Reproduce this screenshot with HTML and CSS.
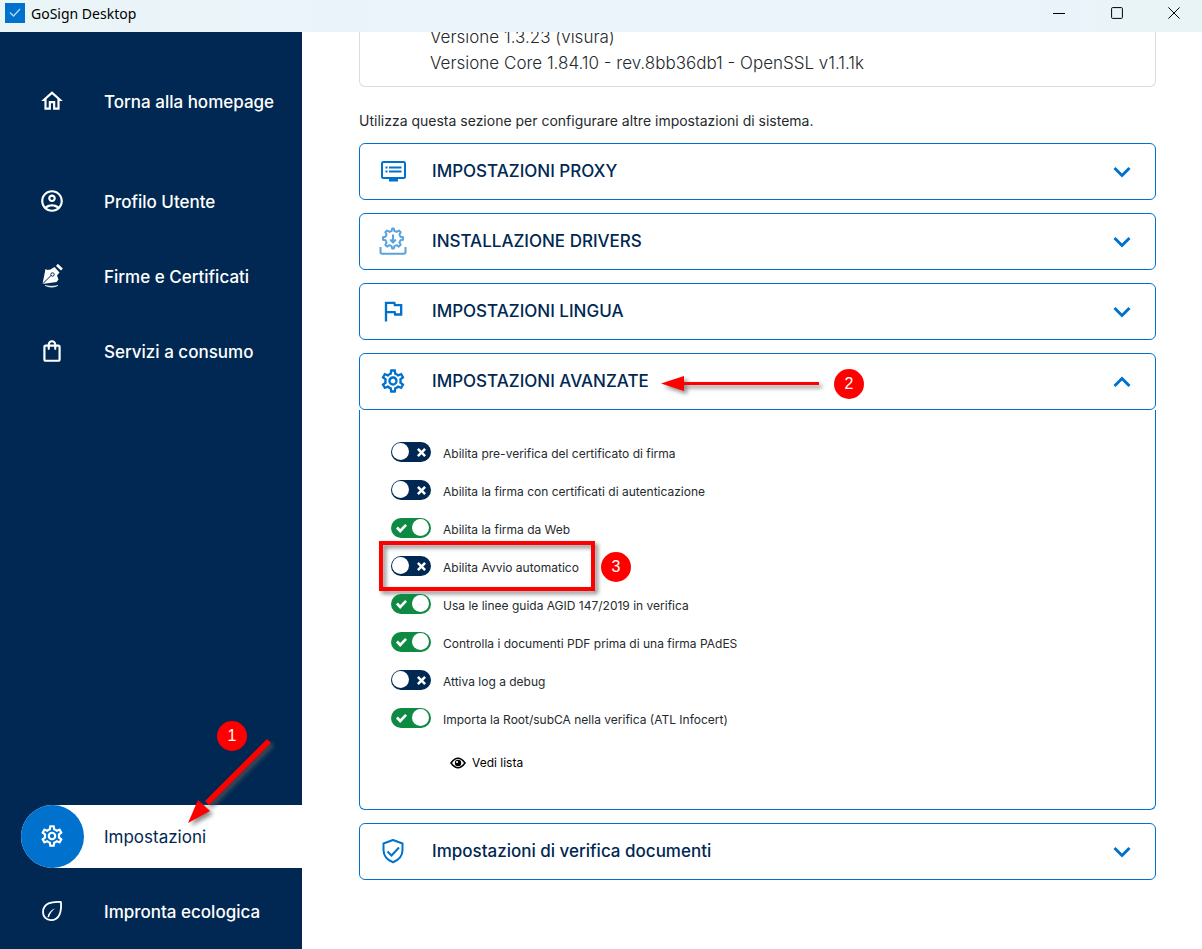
FILE: index.html
```html
<!DOCTYPE html>
<html lang="it">
<head>
    <meta charset="UTF-8">
    <meta name="viewport" content="width=device-width, initial-scale=1.0">
    <title>GoSign Desktop</title>
    <link rel="stylesheet" href="styles.css">
</head>
<body>
    <header class="titlebar">
        <span class="app-icon">
            <svg viewBox="0 0 20 20"><path d="M5 9.5l3.5 3.5 6.5-7" fill="none" stroke="#b5d8f5" stroke-width="1.3"/></svg>
        </span>
        <span class="app-name">GoSign Desktop</span>
        <div class="window-buttons">
            <button type="button" aria-label="Riduci">
                <svg viewBox="0 0 12 12"><path d="M0 6.5h12" /></svg>
            </button>
            <button type="button" aria-label="Ingrandisci">
                <svg viewBox="0 0 12 12"><rect x=".6" y=".6" width="10.8" height="10.8" rx="1" /></svg>
            </button>
            <button type="button" aria-label="Chiudi">
                <svg viewBox="0 0 12 12"><path d="M.4.4l11.2 11.2M11.6.4L.4 11.6" /></svg>
            </button>
        </div>
    </header>

    <div class="layout">
        <nav class="sidebar">
            <a href="#home" class="nav-item nav-home">
                <span class="nav-icon">
                    <svg viewBox="0 0 24 24"><path d="M12 5.69l5 4.5V18h-2v-6H9v6H7v-7.81l5-4.5M12 3L2 12h3v8h6v-6h2v6h6v-8h3L12 3z"/></svg>
                </span>
                Torna alla homepage
            </a>
            <a href="#profilo" class="nav-item">
                <span class="nav-icon">
                    <svg viewBox="0 0 24 24"><path d="M12 2C6.48 2 2 6.48 2 12s4.48 10 10 10 10-4.48 10-10S17.52 2 12 2zM7.35 18.5C8.66 17.56 10.26 17 12 17s3.34.56 4.65 1.5C15.34 19.44 13.74 20 12 20s-3.34-.56-4.65-1.5zm10.79-1.38C16.45 15.8 14.32 15 12 15s-4.45.8-6.14 2.12C4.7 15.73 4 13.95 4 12c0-4.42 3.58-8 8-8s8 3.58 8 8c0 1.95-.7 3.73-1.86 5.12z"/><path d="M12 6c-1.93 0-3.5 1.57-3.5 3.5S10.07 13 12 13s3.5-1.57 3.5-3.5S13.93 6 12 6zm0 5c-.83 0-1.5-.67-1.5-1.5S11.17 8 12 8s1.5.67 1.5 1.5S12.83 11 12 11z"/></svg>
                </span>
                Profilo Utente
            </a>
            <a href="#firme" class="nav-item">
                <span class="nav-icon">
                    <svg viewBox="0 0 26 26">
                        <path d="M3.5 21L6.5 6l2 1 3-.5 4-2.5 5 5.500-2.500 3 1.500 4-2 2.500L3.500 21z"/>
                        <path d="M17 3l1.800-2.200 5 4.600-1.800 2.200z"/>
                        <path d="M3.5 21l9-9" fill="none" stroke="#002852"/>
                        <circle cx="13.5" cy="11.500" r="1.700" fill="#fff" stroke="#002852"/>
                        <path d="M6 22.500q7 1.500 13 0-6 3.400-13 0z" stroke="#fff" stroke-width=".5"/>
                    </svg>
                </span>
                Firme e Certificati
            </a>
            <a href="#servizi" class="nav-item">
                <span class="nav-icon">
                    <svg viewBox="0 0 24 24"><path d="M18 6h-2c0-2.21-1.79-4-4-4S8 3.79 8 6H6c-1.1 0-2 .9-2 2v12c0 1.1.9 2 2 2h12c1.1 0 2-.9 2-2V8c0-1.1-.9-2-2-2zm-6-2c1.1 0 2 .9 2 2h-4c0-1.1.9-2 2-2zm6 16H6V8h2v2c0 .55.45 1 1 1s1-.45 1-1V8h4v2c0 .55.45 1 1 1s1-.45 1-1V8h2v12z"/></svg>
                </span>
                Servizi a consumo
            </a>

            <div class="nav-bottom">
                <a href="#impostazioni" class="nav-item active" aria-current="page">
                    <span class="nav-icon">
                        <svg viewBox="0 0 24 24"><use href="#gear"/></svg>
                    </span>
                    Impostazioni
                    <span class="badge badge-one">1</span>
                    <svg class="arrow arrow-one" viewBox="0 0 90 92">
                        <path d="M82 2l4 4-62 62-4-4z"/>
                        <path d="M3 86l10-23 12 11z"/>
                    </svg>
                </a>
                <a href="#ecologia" class="nav-item">
                    <span class="nav-icon">
                        <svg viewBox="0 0 24 24"><path d="M20.2 3.7C12 3 3.7 4.8 3.7 13.2c0 4.3 3.2 7.2 7.3 7.2 8 0 10-8 9.2-16.7z" fill="none" stroke="#fff" stroke-width="1.7" stroke-linejoin="round"/><path d="M7.8 17.8c.6-3.8 3.2-6.6 7-8.3-2.6 2.3-4.6 4.8-5.6 8.3z"/></svg>
                    </span>
                    Impronta ecologica
                </a>
            </div>
        </nav>

        <main class="content">
            <section class="versions">
                <p>Versione 1.3.23 (visura)</p>
                <p>Versione Core 1.84.10 - rev.8bb36db1 - OpenSSL v1.1.1k</p>
            </section>
            <p class="intro">Utilizza questa sezione per configurare altre impostazioni di sistema.</p>

            <div class="accordion">
                <button type="button" class="panel-header" aria-expanded="false">
                    <svg class="panel-icon" viewBox="0 0 28 28">
                        <rect x="3" y="5" width="23" height="16" rx="1.5" fill="none" stroke="currentColor" stroke-width="2"/>
                        <path d="M6.5 9.5h2v2h-2zM10 9.5h12.5v2H10zM6.5 13.5h2v2h-2zM10 13.5h12.5v2H10zM10 22h9v2.5h-9z"/>
                    </svg>
                    <span class="panel-title">IMPOSTAZIONI PROXY</span>
                    <svg class="chevron" viewBox="0 0 18 12"><path d="M1.500 2L9 9.500 16.500 2"/></svg>
                </button>

                <button type="button" class="panel-header" aria-expanded="false">
                    <svg class="panel-icon drivers" viewBox="0 0 28 28">
                        <g fill="none" stroke="currentColor" stroke-width="2" stroke-linejoin="round">
                            <path d="M12.6 4l.6-2.5h1.6l.6 2.5 2.3.9 2.2-1.4 1.8 1.7-1.3 2.2 1 2.3 2.6.6v2.4l-2.6.6-1 2.3 1.3 2.2-1.8 1.8-2.2-1.4-2.3 1-.6 2.4h-1.6l-.6-2.4-2.3-1-2.2 1.4-1.8-1.8 1.3-2.2-1-2.3-2.6-.6v-2.4l2.6-.6 1-2.3-1.3-2.2 1.8-1.7 2.2 1.4z"/>
                            <path d="M14 7.5v8M11.2 12.5l2.8 3.2 2.8-3.2"/>
                            <path d="M1.5 20v5q0 1.700 1.700 1.700h21.600q1.700 0 1.700-1.700v-5"/>
                        </g>
                    </svg>
                    <span class="panel-title">INSTALLAZIONE DRIVERS</span>
                    <svg class="chevron" viewBox="0 0 18 12"><path d="M1.500 2L9 9.500 16.500 2"/></svg>
                </button>

                <button type="button" class="panel-header" aria-expanded="false">
                    <svg class="panel-icon" viewBox="0 0 24 24"><path d="M12.36 6l.4 2H18v6h-3.360l-.4-2H7V6h5.360M14 4H5v17h2v-7h5.600l.4 2h7V6h-5.600L14 4z"/></svg>
                    <span class="panel-title">IMPOSTAZIONI LINGUA</span>
                    <svg class="chevron" viewBox="0 0 18 12"><path d="M1.500 2L9 9.500 16.500 2"/></svg>
                </button>

                <div class="panel">
                    <button type="button" class="panel-header" aria-expanded="true">
                        <svg class="panel-icon" viewBox="0 0 24 24"><use href="#gear"/></svg>
                        <span class="panel-title">IMPOSTAZIONI AVANZATE</span>
                        <svg class="chevron" viewBox="0 0 18 12"><path d="M1.500 10L9 2.500l7.500 7.500"/></svg>
                        <svg class="arrow arrow-two" viewBox="0 0 164 24">
                            <path d="M22 10h136v3H22z"/>
                            <path d="M0 11.500L23 4v15z"/>
                        </svg>
                        <span class="badge badge-two">2</span>
                    </button>
                    <div class="panel-body">
                        <ul class="options">
                            <li><input type="checkbox" class="switch" id="pre-verifica"><label for="pre-verifica">Abilita pre-verifica del certificato di firma</label></li>
                            <li><input type="checkbox" class="switch" id="autenticazione"><label for="autenticazione">Abilita la firma con certificati di autenticazione</label></li>
                            <li><input type="checkbox" class="switch" id="web" checked><label for="web">Abilita la firma da Web</label></li>
                            <li>
                                <input type="checkbox" class="switch" id="avvio"><label for="avvio">Abilita Avvio automatico</label>
                                <span class="highlight"></span>
                                <span class="badge badge-three">3</span>
                            </li>
                            <li><input type="checkbox" class="switch" id="agid" checked><label for="agid">Usa le linee guida AGID 147/2019 in verifica</label></li>
                            <li><input type="checkbox" class="switch" id="pades" checked><label for="pades">Controlla i documenti PDF prima di una firma PAdES</label></li>
                            <li><input type="checkbox" class="switch" id="debug"><label for="debug">Attiva log a debug</label></li>
                            <li><input type="checkbox" class="switch" id="root" checked><label for="root">Importa la Root/subCA nella verifica (ATL Infocert)</label></li>
                        </ul>
                        <a href="#lista" class="list-link">
                            <svg viewBox="0 0 16 12"><path d="M1 6q7-9.5 14 0-7 9.5-14 0z" fill="none" stroke="#000" stroke-width="1.6"/><circle cx="8" cy="6" r="3.2"/><circle cx="7" cy="5" r="1.1" fill="#fff"/></svg>
                            Vedi lista
                        </a>
                    </div>
                </div>

                <button type="button" class="panel-header" aria-expanded="false">
                    <svg class="panel-icon" viewBox="0 0 28 28">
                        <g fill="none" stroke="currentColor" stroke-width="2">
                            <path d="M14 3l9.5 3.5V13c0 6-3.800 10-9.500 12.300C8.300 23 4.500 19 4.500 13V6.500z" stroke-linejoin="round"/>
                            <path d="M8.5 14.5l4 4 7.500-8"/>
                        </g>
                    </svg>
                    <span class="panel-title">Impostazioni di verifica documenti</span>
                    <svg class="chevron" viewBox="0 0 18 12"><path d="M1.500 2L9 9.500 16.500 2"/></svg>
                </button>
            </div>
        </main>
    </div>

    <svg class="symbols" aria-hidden="true">
        <symbol id="gear" viewBox="0 0 24 24">
            <path d="M19.43 12.98c.04-.32.07-.64.07-.98 0-.34-.03-.66-.07-.98l2.11-1.65c.19-.15.24-.42.12-.64l-2-3.46c-.09-.16-.26-.25-.44-.25-.06 0-.12.01-.17.03l-2.49 1c-.52-.4-1.08-.73-1.69-.98l-.38-2.65C14.46 2.18 14.25 2 14 2h-4c-.25 0-.46.18-.49.42l-.38 2.65c-.61.25-1.17.59-1.69.98l-2.49-1c-.06-.02-.12-.03-.18-.03-.17 0-.34.09-.43.25l-2 3.46c-.13.22-.07.49.12.64l2.11 1.65c-.04.32-.07.65-.07.98 0 .33.03.66.07.98l-2.11 1.65c-.19.15-.24.42-.12.64l2 3.46c.09.16.26.25.44.25.06 0 .12-.01.17-.03l2.49-1c.52.4 1.08.73 1.69.98l.38 2.65c.03.24.24.42.49.42h4c.25 0 .46-.18.49-.42l.38-2.65c.61-.25 1.17-.59 1.69-.98l2.49 1c.06.02.12.03.18.03.17 0 .34-.09.43-.25l2-3.46c.12-.22.07-.49-.12-.64l-2.11-1.65zm-1.98-1.71c.04.31.05.52.05.73 0 .21-.02.43-.05.73l-.14 1.13.89.7 1.08.84-.7 1.21-1.27-.51-1.04-.42-.9.68c-.43.32-.84.56-1.25.73l-1.06.43-.16 1.13-.2 1.35h-1.4l-.19-1.35-.16-1.13-1.06-.43c-.43-.18-.83-.41-1.23-.71l-.91-.7-1.06.43-1.27.51-.7-1.21 1.08-.84.89-.7-.14-1.13c-.03-.31-.05-.54-.05-.74s.02-.43.05-.73l.14-1.13-.89-.7-1.08-.84.7-1.21 1.27.51 1.04.42.9-.68c.43-.32.84-.56 1.25-.73l1.06-.43.16-1.13.2-1.35h1.39l.19 1.35.16 1.13 1.06.43c.43.18.83.41 1.23.71l.91.7 1.06-.43 1.27-.51.7 1.21-1.07.85-.89.7.14 1.13zM12 8c-2.21 0-4 1.79-4 4s1.79 4 4 4 4-1.79 4-4-1.79-4-4-4zm0 6c-1.1 0-2-.9-2-2s.9-2 2-2 2 .9 2 2-.9 2-2 2z"/>
        </symbol>
    </svg>
</body>
</html>
```
FILE: styles.css
```css
:root {
    --navy: #002852;
    --blue: #0072ce;
    --green: #0f8a43;
    --red: #ff0000;
    --text: #262a2e;
    --radius: 6px;
}

* {
    margin: 0;
    padding: 0;
    box-sizing: border-box;
}

body {
    font-family: Inter, "Liberation Sans", sans-serif;
    background: #fff;
    color: var(--text);
    height: 100vh;
    display: flex;
    flex-direction: column;
    overflow: hidden;
}

button {
    font: inherit;
    background: none;
    border: none;
    cursor: pointer;
}

a {
    color: inherit;
    text-decoration: none;
}

svg {
    fill: currentColor;
    flex-shrink: 0;
}

.symbols {
    display: none;
}

/* window title bar */
.titlebar {
    display: flex;
    align-items: center;
    flex-shrink: 0;
    height: 32px;
    padding: 0 0 6px 5px;
    background: linear-gradient(to right, #eaf5f7, #ebf3fb 35%, #ebf3fb 85%, #e9f4f7 95%);
    color: #000;
}

.app-icon {
    width: 20px;
    height: 20px;
    background: var(--blue);
}

.app-icon svg {
    display: block;
}

.app-name {
    margin: 0 auto 0 6px;
    font-family: "Noto Sans", sans-serif;
    font-size: 14px;
}

.window-buttons {
    display: flex;
}

.window-buttons button {
    display: grid;
    place-items: center;
    width: 58px;
    height: 26px;
}

.window-buttons svg {
    width: 12px;
    height: 12px;
    fill: none;
    stroke: #000;
    stroke-width: 1;
}

.window-buttons button:last-child {
    width: 56px;
}

.layout {
    display: flex;
    flex: 1;
    min-height: 0;
}

/* sidebar */
.sidebar {
    display: flex;
    flex-direction: column;
    gap: 12px;
    width: 302px;
    flex-shrink: 0;
    padding: 38px 0 6px 21px;
    background: var(--navy);
    color: #fff;
}

.nav-item {
    position: relative;
    display: flex;
    align-items: center;
    gap: 20px;
    height: 63px;
    border-radius: 32px 0 0 32px;
    font-size: 17px;
    font-weight: 500;
}

.nav-home {
    margin-bottom: 25px;
}

.nav-icon {
    display: grid;
    place-items: center;
    width: 63px;
    height: 63px;
    padding: 0 1px 1px 0;
    border-radius: 50%;
}

.nav-icon svg {
    width: 26px;
    height: 26px;
}

.nav-bottom {
    display: flex;
    flex-direction: column;
    gap: 12px;
    margin-top: auto;
}

.nav-item.active {
    background: #fff;
    color: var(--navy);
    font-weight: 400;
}

.active .nav-icon {
    background: var(--blue);
    color: #fff;
}

/* content */
.content {
    flex: 1;
    min-width: 0;
    padding: 0 46px 0 57px;
    overflow: hidden;
}

.versions {
    margin-top: -8px;
    padding: 0 70px 10px;
    border: 1px solid #dcdcdc;
    border-top: none;
    border-radius: 0 0 var(--radius) var(--radius);
    font-size: 17px;
    font-weight: 300;
    line-height: 26px;
}

.intro {
    margin: 24px 0 12px;
    font-size: 14px;
    line-height: 20px;
}

.accordion {
    display: flex;
    flex-direction: column;
    gap: 13px;
}

.panel-header {
    position: relative;
    display: flex;
    align-items: center;
    width: 100%;
    height: 57px;
    padding: 0 24px 2px 19px;
    border: 1px solid var(--blue);
    border-radius: var(--radius);
    color: var(--blue);
    text-align: left;
}

.panel-icon {
    width: 28px;
    height: 28px;
}

.drivers {
    opacity: 0.65;
}

.panel-title {
    flex: 1;
    margin-left: 25px;
    color: var(--navy);
    font-size: 17px;
    font-weight: 500;
}

.chevron {
    width: 18px;
    height: 12px;
    margin-top: 3px;
    fill: none;
    stroke: var(--blue);
    stroke-width: 3;
}

.panel-body {
    padding: 23px 31px 36px;
    border: 1px solid var(--blue);
    border-top: none;
    border-radius: 0 0 var(--radius) var(--radius);
}

.options {
    list-style: none;
}

.options li {
    position: relative;
    display: flex;
    align-items: center;
    gap: 12px;
    width: fit-content;
    height: 38px;
    font-size: 12px;
}

.options label {
    padding-top: 3px;
}

.switch {
    appearance: none;
    position: relative;
    width: 40px;
    height: 20px;
    border-radius: 10px;
    background: var(--navy);
    cursor: pointer;
}

.switch::before {
    content: "";
    position: absolute;
    top: 1px;
    left: 1px;
    width: 17px;
    height: 17px;
    border-radius: 50%;
    background: #fff;
}

.switch::after {
    content: "";
    position: absolute;
    top: 6px;
    right: 5px;
    width: 9px;
    height: 9px;
    background: #fff;
    clip-path: polygon(0 20%, 20% 0, 50% 30%, 80% 0, 100% 20%, 70% 50%, 100% 80%, 80% 100%, 50% 70%, 20% 100%, 0 80%, 30% 50%);
}

.switch:checked {
    background: var(--green);
}

.switch:checked::before {
    left: 21px;
}

.switch:checked::after {
    left: 5px;
    width: 11px;
    clip-path: polygon(0 50%, 17% 28%, 38% 56%, 83% 0, 100% 20%, 38% 100%);
}

.list-link {
    display: flex;
    align-items: center;
    gap: 6px;
    width: fit-content;
    margin: 16px 0 0 59px;
    color: #000;
    font-size: 12px;
    line-height: 20px;
}

.list-link svg {
    width: 16px;
    height: 12px;
}

/* tutorial marks over the window */
.badge {
    position: absolute;
    display: grid;
    place-items: center;
    width: 30px;
    height: 30px;
    border-radius: 50%;
    background: var(--red);
    color: #fff;
    font-family: "Liberation Sans", sans-serif;
    font-size: 16px;
    font-weight: 400;
}

.arrow {
    position: absolute;
    fill: var(--red);
    filter: drop-shadow(3px 3px 2px rgba(90, 90, 90, 0.7));
}

.badge-one {
    top: -84px;
    left: 196px;
}

.arrow-one {
    top: -68px;
    left: 164px;
    width: 90px;
    height: 92px;
}

.badge-two {
    top: 15px;
    left: 474px;
}

.arrow-two {
    top: 18px;
    left: 301px;
    width: 164px;
    height: 24px;
}

.highlight {
    position: absolute;
    top: -6px;
    left: -12px;
    width: 216px;
    height: 50px;
    border: 4px solid var(--red);
    filter: drop-shadow(3px 3px 2px rgba(90, 90, 90, 0.7));
    pointer-events: none;
}

.badge-three {
    top: 5px;
    left: 210px;
}
```
